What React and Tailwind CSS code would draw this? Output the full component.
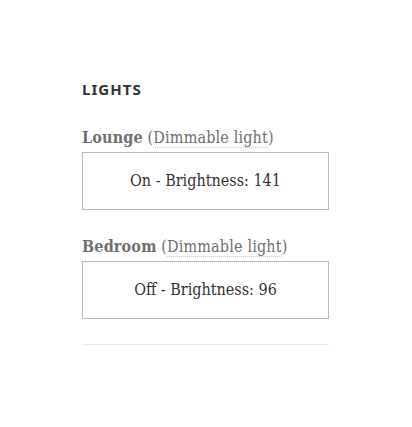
const lights = [
  { name: "Lounge", on: true, brightness: 141 },
  { name: "Bedroom", on: false, brightness: 96 },
];

export default function App() {
  return (
    <div className="w-[412px] h-[427px] bg-white">
      <div className="pl-[82px] pr-[83px] pt-[79px]">
        <h2 className="font-['Noto_Sans',sans-serif] font-bold text-[15px] leading-[20px] tracking-[0.07em] text-[#333] uppercase">
          Lights
        </h2>
        <div className="mt-[27px] font-['DejaVu_Serif_Condensed','DejaVu_Serif',serif]">
          {lights.map((l) => (
            <div key={l.name} className="mb-[25px]">
              <label className="block text-[#707070] text-[16px] leading-[24px] tracking-[0.01em]">
                <span className="font-bold">{l.name}</span> (
                <span className="border-b border-dotted border-[#ccc]">Dimmable light</span>)
              </label>
              <div className="mt-[2px] h-[58px] border border-[#bbb] flex items-center justify-center text-[#333] text-[16px]">
                {l.on ? "On" : "Off"} - Brightness: {l.brightness}
              </div>
            </div>
          ))}
          <div className="border-t border-[#eaeaea]" />
        </div>
      </div>
    </div>
  );
}
